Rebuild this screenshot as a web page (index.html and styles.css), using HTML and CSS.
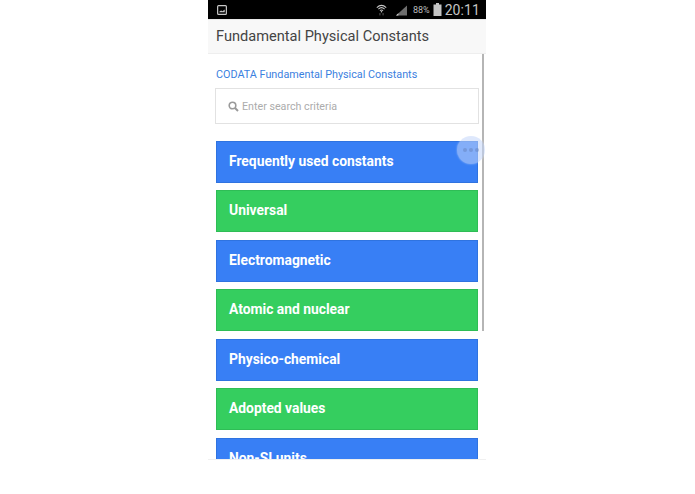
FILE: index.html
```html
<!DOCTYPE html>
<html lang="en">
<head>
<meta charset="utf-8">
<title>Fundamental Physical Constants</title>
<link rel="stylesheet" href="styles.css">
</head>
<body>
<div class="phone">
  <div class="status">
    <svg class="shot" width="10" height="10" viewBox="0 0 11 11"><rect x="0.7" y="0.7" width="9.6" height="9.6" rx="1" fill="none" stroke="#c8c8c8" stroke-width="1.3"/><path d="M2.5 7.5 L4.5 6 L6 7 L8.5 5 V8 H2.5 Z" fill="#c8c8c8"/></svg>
    <div class="status-right">
      <svg class="wifi" width="11" height="15" viewBox="0 0 14 15"><g fill="none" stroke="#c8c8c8" stroke-width="1.3"><path d="M1 5 Q7 -0.5 13 5"/><path d="M3 7 Q7 3.2 11 7"/><path d="M5 9 Q7 7.2 9 9"/></g><circle cx="7" cy="10.4" r="1" fill="#c8c8c8"/><path d="M5 15 V12 M9 15 V12" stroke="#777" stroke-width="1"/></svg>
      <svg class="signal" width="11" height="11" viewBox="0 0 14 13"><path d="M0 13 L14 0 V13 Z" fill="#6e6e6e"/><path d="M0 13 H3 V10 Z" fill="#ccc"/></svg>
      <span class="pct">88%</span>
      <svg class="battery" width="9" height="13" viewBox="0 0 8 13"><rect x="2.5" y="0" width="3" height="2" fill="#c4c4c4"/><rect x="0" y="1.5" width="8" height="11.5" fill="#c4c4c4"/></svg>
      <span class="clock">20:11</span>
    </div>
  </div>
  <header class="title-bar">Fundamental Physical Constants</header>
  <main class="content">
    <a class="link">CODATA Fundamental Physical Constants</a>
    <div class="search">
      <svg width="11" height="11" viewBox="0 0 11 11"><circle cx="4.5" cy="4.5" r="3.3" fill="none" stroke="#9a9a9a" stroke-width="1.6"/><path d="M7 7 L10 10" stroke="#9a9a9a" stroke-width="2"/></svg>
      <span>Enter search criteria</span>
    </div>
    <div class="list">
      <div class="item blue">Frequently used constants</div>
      <div class="item green">Universal</div>
      <div class="item blue">Electromagnetic</div>
      <div class="item green">Atomic and nuclear</div>
      <div class="item blue">Physico-chemical</div>
      <div class="item green">Adopted values</div>
      <div class="item blue">Non-SI units</div>
    </div>
    <div class="scrollbar"></div>
    <div class="float-btn"><i></i><i></i><i></i></div>
  </main>
</div>
</body>
</html>
```

FILE: styles.css
```css
* { box-sizing: border-box; }
html, body { margin: 0; height: 100%; background: #fff; }
body { padding-left: 208px; font-family: Roboto, "Liberation Sans", sans-serif; overflow: hidden; }
.phone { width: 278px; height: 460px; display: flex; flex-direction: column; background: #fff; border-bottom: 1px solid #f0f0f0; }
.status { height: 19px; flex: none; background: #000; display: flex; align-items: center; justify-content: space-between; padding: 0 6px 0 9px; }
.shot { display: block; }
.status-right { display: flex; align-items: center; }
.wifi { margin-right: 9px; }
.signal { margin-right: 6px; margin-top: 2px; }
.pct { font-size: 9px; color: #bdbdbd; margin-right: 3px; }
.battery { margin-right: 3px; }
.clock { font-size: 14px; color: #c4c4c4; letter-spacing: 0.1px; }
.title-bar { height: 35px; flex: none; background: #f8f8f8; border-bottom: 1px solid #eee; border-top: 1px solid #e8e8e8; padding: 0 8px 2px; display: flex; align-items: center; font-size: 14.6px; color: #444; }
.content { position: relative; flex: 1; min-height: 0; overflow: hidden; padding: 14px 8px 0 7px; }
.link { display: block; padding-left: 1px; font-size: 10.8px; line-height: 14px; color: #3b7fe0; }
.search { height: 36px; margin-top: 6px; width: 264px; border: 1px solid #e2e2e2; background: #fff; display: flex; align-items: center; gap: 3px; padding-left: 12px; font-size: 10.7px; color: #acacac; }
.list { margin-top: 16.6px; padding-left: 1px; display: flex; flex-direction: column; gap: 7.5px; }
.item { height: 42px; flex: none; width: 262px; padding: 0 0 2px 12px; display: flex; align-items: center; font-size: 13.85px; font-weight: 700; color: #fff; }
.blue { background: #387ff5; border: 1px solid #2f73e0; }
.green { background: #35ce5f; border: 1px solid #2fbd56; }
.scrollbar { position: absolute; left: 274px; top: 0; width: 2px; height: 277px; background: #b5b5b5; }
.float-btn { position: absolute; left: 249px; top: 82px; width: 28px; height: 28px; border-radius: 50%; background: rgba(195, 213, 250, 0.55); box-shadow: 0 0 2px rgba(255,255,255,0.5); display: flex; align-items: center; justify-content: center; gap: 1.5px; }
.float-btn i { width: 4.5px; height: 4.5px; border-radius: 50%; background: rgba(100, 130, 190, 0.5); }
```
